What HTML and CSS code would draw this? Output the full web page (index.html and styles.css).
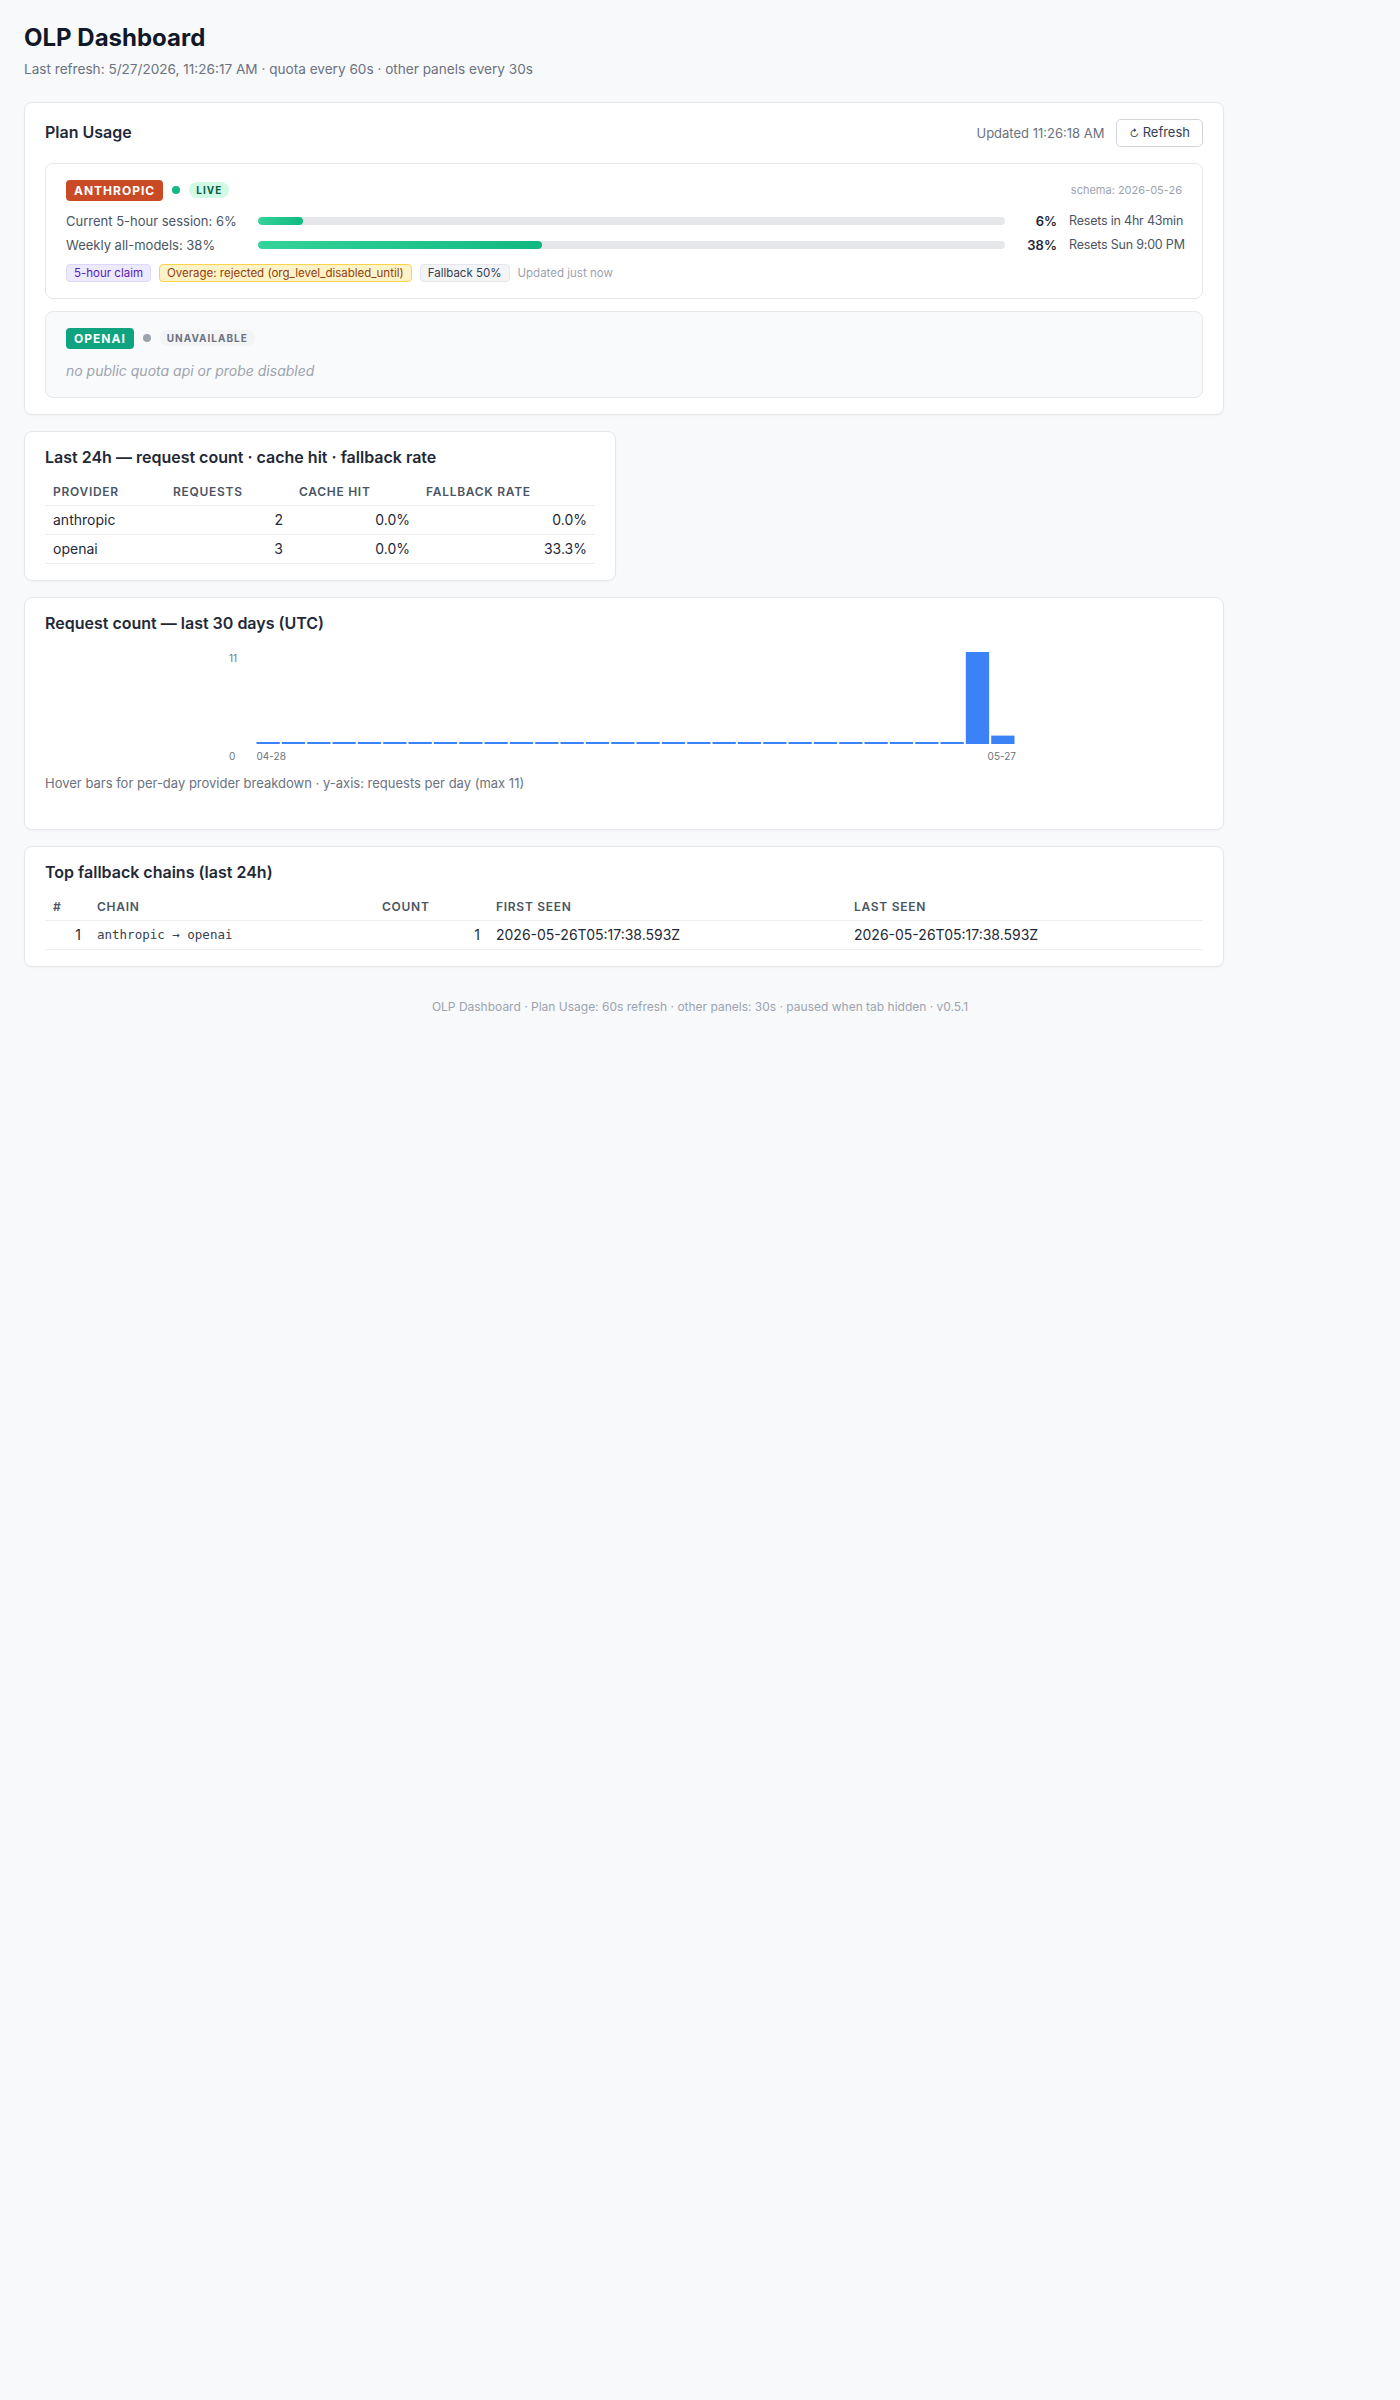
FILE: index.html
```html
<!DOCTYPE html>
<html lang="en">
<head>
    <meta charset="UTF-8">
    <meta name="viewport" content="width=device-width, initial-scale=1.0">
    <title>OLP Dashboard</title>
    <link rel="stylesheet" href="styles.css">
</head>
<body>
    <div class="page">
        <header class="page-head">
            <h1>OLP Dashboard</h1>
            <p class="subtitle">Last refresh: 5/27/2026, 11:26:17 AM · quota every 60s · other panels every 30s</p>
        </header>

        <!-- plan usage per provider -->
        <section class="card">
            <div class="plan-head">
                <h2 class="card-title">Plan Usage</h2>
                <div class="plan-meta">
                    <span>Updated 11:26:18 AM</span>
                    <button type="button" class="btn"><span class="btn-icon">↻</span> Refresh</button>
                </div>
            </div>

            <div class="provider">
                <div class="prov-head">
                    <span class="badge badge-anthropic">ANTHROPIC</span>
                    <span class="dot dot-live"></span>
                    <span class="state state-live">LIVE</span>
                    <span class="schema">schema: 2026-05-26</span>
                </div>
                <div class="quota-row">
                    <span class="quota-label">Current 5-hour session: 6%</span>
                    <div class="track"><div class="fill" style="width: 6%"></div></div>
                    <span class="quota-pct">6%</span>
                    <span class="quota-reset">Resets in 4hr 43min</span>
                </div>
                <div class="quota-row">
                    <span class="quota-label">Weekly all-models: 38%</span>
                    <div class="track"><div class="fill" style="width: 38%"></div></div>
                    <span class="quota-pct">38%</span>
                    <span class="quota-reset">Resets Sun 9:00 PM</span>
                </div>
                <div class="tags">
                    <span class="tag tag-purple">5-hour claim</span>
                    <span class="tag tag-amber">Overage: rejected (org_level_disabled_until)</span>
                    <span class="tag tag-gray">Fallback 50%</span>
                    <span class="tag-note">Updated just now</span>
                </div>
            </div>

            <div class="provider provider-off">
                <div class="prov-head">
                    <span class="badge badge-openai">OPENAI</span>
                    <span class="dot dot-off"></span>
                    <span class="state state-off">UNAVAILABLE</span>
                </div>
                <p class="prov-note">no public quota api or probe disabled</p>
            </div>
        </section>

        <div class="row-2">
            <section class="card">
                <h2 class="card-title">Last 24h — request count · cache hit · fallback rate</h2>
                <table class="grid">
                    <thead>
                        <tr>
                            <th class="w-provider">Provider</th>
                            <th class="w-requests">Requests</th>
                            <th class="w-cache">Cache hit</th>
                            <th>Fallback rate</th>
                        </tr>
                    </thead>
                    <tbody>
                        <tr>
                            <td>anthropic</td>
                            <td class="num">2</td>
                            <td class="num">0.0%</td>
                            <td class="num">0.0%</td>
                        </tr>
                        <tr>
                            <td>openai</td>
                            <td class="num">3</td>
                            <td class="num">0.0%</td>
                            <td class="num">33.3%</td>
                        </tr>
                    </tbody>
                </table>
            </section>
        </div>

        <!-- daily request histogram -->
        <section class="card">
            <h2 class="card-title">Request count — last 30 days (UTC)</h2>
            <div class="chart">
                <svg width="800" height="120" viewBox="0 0 800 120">
                    <text class="axis" x="5" y="17">11</text>
                    <text class="axis" x="5" y="115">0</text>
                    <text class="axis" x="32.5" y="115">04-28</text>
                    <text class="axis" x="792" y="115" text-anchor="end">05-27</text>
                    <g class="bars">
                        <rect x="32.5" y="97" width="23.3" height="2"/>
                        <rect x="57.8" y="97" width="23.3" height="2"/>
                        <rect x="83.2" y="97" width="23.3" height="2"/>
                        <rect x="108.5" y="97" width="23.3" height="2"/>
                        <rect x="133.8" y="97" width="23.3" height="2"/>
                        <rect x="159.2" y="97" width="23.3" height="2"/>
                        <rect x="184.5" y="97" width="23.3" height="2"/>
                        <rect x="209.8" y="97" width="23.3" height="2"/>
                        <rect x="235.2" y="97" width="23.3" height="2"/>
                        <rect x="260.5" y="97" width="23.3" height="2"/>
                        <rect x="285.8" y="97" width="23.3" height="2"/>
                        <rect x="311.2" y="97" width="23.3" height="2"/>
                        <rect x="336.5" y="97" width="23.3" height="2"/>
                        <rect x="361.8" y="97" width="23.3" height="2"/>
                        <rect x="387.2" y="97" width="23.3" height="2"/>
                        <rect x="412.5" y="97" width="23.3" height="2"/>
                        <rect x="437.8" y="97" width="23.3" height="2"/>
                        <rect x="463.2" y="97" width="23.3" height="2"/>
                        <rect x="488.5" y="97" width="23.3" height="2"/>
                        <rect x="513.8" y="97" width="23.3" height="2"/>
                        <rect x="539.2" y="97" width="23.3" height="2"/>
                        <rect x="564.5" y="97" width="23.3" height="2"/>
                        <rect x="589.8" y="97" width="23.3" height="2"/>
                        <rect x="615.2" y="97" width="23.3" height="2"/>
                        <rect x="640.5" y="97" width="23.3" height="2"/>
                        <rect x="665.8" y="97" width="23.3" height="2"/>
                        <rect x="691.2" y="97" width="23.3" height="2"/>
                        <rect x="716.5" y="97" width="23.3" height="2"/>
                        <rect x="741.8" y="7" width="23.3" height="92"/>
                        <rect x="767.2" y="90.6" width="23.3" height="8.4"/>
                    </g>
                </svg>
            </div>
            <p class="chart-note">Hover bars for per-day provider breakdown · y-axis: requests per day (max 11)</p>
        </section>

        <section class="card">
            <h2 class="card-title">Top fallback chains (last 24h)</h2>
            <table class="grid">
                <thead>
                    <tr>
                        <th class="w-rank">#</th>
                        <th class="w-chain">Chain</th>
                        <th class="w-count">Count</th>
                        <th class="w-seen">First seen</th>
                        <th>Last seen</th>
                    </tr>
                </thead>
                <tbody>
                    <tr>
                        <td class="num">1</td>
                        <td class="mono">anthropic → openai</td>
                        <td class="num">1</td>
                        <td>2026-05-26T05:17:38.593Z</td>
                        <td>2026-05-26T05:17:38.593Z</td>
                    </tr>
                </tbody>
            </table>
        </section>
    </div>

    <footer class="footer">OLP Dashboard · Plan Usage: 60s refresh · other panels: 30s · paused when tab hidden · v0.5.1</footer>
</body>
</html>
```

FILE: styles.css
```css
* {
    box-sizing: border-box;
}

body {
    margin: 0;
    padding: 24px;
    background-color: #f8f9fb;
    color: #1f2937;
    font-family: Inter, "Noto Sans", "Liberation Sans", sans-serif;
}

.page {
    max-width: 1200px;
}

.page-head h1 {
    margin: 0 0 7px;
    font-size: 24px;
    line-height: 1.2;
    font-weight: 700;
    color: #111827;
}

.subtitle {
    margin: 0 0 24px;
    font-size: 13.6px;
    line-height: 18px;
    color: #6b7280;
}

.card {
    background-color: #fff;
    border: 1px solid #e5e7eb;
    border-radius: 8px;
    padding: 16px 20px;
    margin-bottom: 16px;
    box-shadow: 0 1px 2px rgba(16, 24, 40, 0.03);
}

.card-title {
    margin: 0 0 12px;
    font-size: 16px;
    line-height: 1.2;
    font-weight: 600;
    color: #1f2937;
}

.row-2 {
    display: grid;
    grid-template-columns: 1fr 1fr;
    column-gap: 16px;
}

/* plan usage */
.plan-head {
    display: flex;
    align-items: center;
    margin-bottom: 16px;
}

    .plan-head .card-title {
        margin: 0;
    }

.plan-meta {
    margin-left: auto;
    display: flex;
    align-items: center;
    gap: 12px;
    font-size: 13px;
    color: #6b7280;
}

.btn {
    font-family: inherit;
    font-size: 13px;
    line-height: 17px;
    padding: 4px 12px;
    color: #374151;
    background-color: #fff;
    border: 1px solid #d1d5db;
    border-radius: 5px;
    cursor: pointer;
}

    .btn:hover {
        background-color: #f3f4f6;
    }

.btn-icon {
    font-size: 10px;
}

.provider {
    border: 1px solid #e5e7eb;
    border-radius: 8px;
    padding: 16px 20px;
}

    .provider + .provider {
        margin-top: 12px;
    }

.provider-off {
    background-color: #f9fafb;
}

.prov-head {
    display: flex;
    align-items: center;
    gap: 9px;
    margin-bottom: 11px;
}

.badge {
    display: inline-block;
    padding: 3px 8px;
    font-size: 12px;
    line-height: 15px;
    font-weight: 700;
    letter-spacing: 1px;
    color: #fff;
    border-radius: 4px;
}

.badge-anthropic {
    background-color: #cb4a26;
}

.badge-openai {
    background-color: #10a37f;
}

.dot {
    width: 8px;
    height: 8px;
    border-radius: 50%;
}

.dot-live {
    background-color: #10b981;
}

.dot-off {
    background-color: #9ca3af;
}

.state {
    padding: 0 7px;
    font-size: 10px;
    line-height: 16px;
    font-weight: 700;
    letter-spacing: 1px;
    border-radius: 8px;
}

.state-live {
    background-color: #d1fae5;
    color: #065f46;
}

.state-off {
    background-color: #f3f4f6;
    color: #6b7280;
}

.schema {
    margin-left: auto;
    font-size: 11px;
    color: #9ca3af;
}

.quota-row {
    display: grid;
    grid-template-columns: 180px 1fr 40px 113px;
    column-gap: 12px;
    align-items: center;
    height: 18px;
    font-size: 13px;
}

    .quota-row + .quota-row {
        margin-top: 6px;
    }

.quota-label {
    color: #4b5563;
}

.track {
    height: 8px;
    background-color: #e5e7eb;
    border-radius: 4px;
    overflow: hidden;
}

.fill {
    height: 100%;
    background: linear-gradient(90deg, #34d399, #10b981);
    border-radius: 4px;
}

.quota-pct {
    text-align: right;
    font-weight: 600;
    color: #1f2937;
}

.quota-reset {
    text-align: right;
    font-size: 12.5px;
    letter-spacing: -0.2px;
    color: #4b5563;
    white-space: nowrap;
}

.tags {
    display: flex;
    align-items: center;
    gap: 8px;
    margin-top: 10px;
}

.tag {
    padding: 0 7px;
    font-size: 11.5px;
    line-height: 16px;
    border: 1px solid;
    border-radius: 4px;
}

.tag-purple {
    background-color: #ede9fe;
    border-color: #ddd6fe;
    color: #5b21b6;
}

.tag-amber {
    background-color: #fef3c7;
    border-color: #fcd34d;
    color: #92400e;
}

.tag-gray {
    background-color: #f3f4f6;
    border-color: #e5e7eb;
    color: #374151;
}

.tag-note {
    font-size: 11.5px;
    color: #9ca3af;
}

.prov-note {
    margin: 12px 0 0;
    font-size: 14px;
    line-height: 20px;
    font-style: italic;
    color: #9ca3af;
}

/* tables */
.grid {
    width: 100%;
    border-collapse: collapse;
}

    .grid th {
        padding: 7px 8px;
        font-size: 12px;
        line-height: 12px;
        font-weight: 600;
        letter-spacing: 0.06em;
        text-transform: uppercase;
        text-align: left;
        color: #4b5563;
        border-bottom: 1px solid #eceef1;
    }

    .grid td {
        padding: 6px 8px;
        font-size: 14px;
        line-height: 16px;
        color: #1f2937;
        border-bottom: 1px solid #eceef1;
    }

    .grid td.num {
        text-align: right;
    }

    .grid td.mono {
        font-family: "DejaVu Sans Mono", "Liberation Mono", monospace;
        font-size: 12.5px;
        color: #374151;
    }

.w-provider { width: 120px; }
.w-requests { width: 126px; }
.w-cache { width: 127px; }

.w-rank { width: 44px; }
.w-chain { width: 285px; }
.w-count { width: 114px; }
.w-seen { width: 358px; }

/* chart */
.chart {
    display: flex;
    justify-content: center;
}

    .chart svg {
        display: block;
    }

.axis {
    font-family: Inter, "Noto Sans", sans-serif;
    font-size: 10px;
    fill: #6b7280;
}

.bars rect {
    fill: #3b82f6;
}

    .bars rect:hover {
        fill: #2563eb;
    }

.chart-note {
    margin: 9px 0 21px;
    font-size: 13px;
    line-height: 18px;
    color: #6b7280;
}

.footer {
    margin-top: 31px;
    text-align: center;
    font-size: 12px;
    line-height: 18px;
    color: #9ca3af;
}
```
